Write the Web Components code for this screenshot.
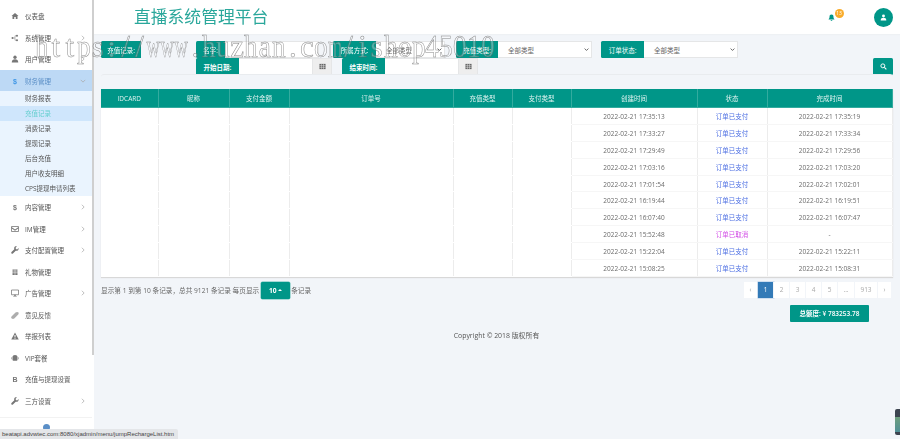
<!DOCTYPE html>
<html lang="zh">
<head>
<meta charset="utf-8">
<title>直播系统管理平台</title>
<style>
  html, body { margin: 0; height: 100%; overflow: hidden; background: #f2f5f9; }
  body { font-family: "Open Sans", "Noto Sans CJK SC", sans-serif; font-size: 6.5px; color: #676a6c; }
</style>
</head>
<body>
<x-app>
  <x-sidebar slot="side"></x-sidebar>
  <x-topbar slot="top"></x-topbar>
  <x-filters slot="main"></x-filters>
  <x-orders slot="main"></x-orders>
  <x-table-foot slot="main"></x-table-foot>
</x-app>

<script>
const TEAL = '#009688';

const ICONS = {
  dashboard: '<path d="M8 2 1 8h2v6h3.5v-4h3v4H13V8h2z"/>',
  sitemap: '<circle cx="3" cy="8" r="2"/><circle cx="12" cy="3.5" r="2"/><circle cx="12" cy="12.5" r="2"/><path d="M3 8h5M8 3.5h4M8 12.5h4M8 3.5v9" stroke="currentColor" fill="none"/>',
  user: '<circle cx="8" cy="4.5" r="3.3"/><path d="M1.5 15c0-5 2.5-6.5 6.5-6.5s6.5 1.500 6.500 6.500z"/>',
  dollar: '<text x="8" y="13.500" text-anchor="middle" font-size="14" font-weight="700" font-family="Liberation Sans">$</text>',
  inbox: '<path d="M1 3h14v10H1z" fill="none" stroke="currentColor" stroke-width="1.600"/><path d="M1 4l7 5 7-5v2.500l-7 5-7-5z"/>',
  wrench: '<path d="M15 4.200 12.300 6.800 9.800 6.200 9.200 3.700 11.800 1C9.500.300 7.300 1 6.500 3.200 6.100 4.400 6.200 5.400 6.600 6.400L1 12c-.900.900-.900 2 0 2.900s2 .900 2.900 0l5.600-5.600c1 .400 2 .500 3.200.100C14.900 8.600 15.700 6.500 15 4.200z"/>',
  gift: '<path d="M3 3h10v11H3z"/><path d="M1.500 6h13M1.500 9.500h13M8 3v11" stroke="#fff" fill="none"/>',
  desktop: '<path d="M1 2h14v9.500H1z" fill="none" stroke="currentColor" stroke-width="1.500"/><path d="M6.500 11.500h3V14h2v1h-7v-1h2z"/>',
  tag: '<path d="M1 11 9 3c1.500-1.500 5-1.500 6 0s0 3.500-1.500 5l-7 7c-1.500 1-3.500 1-5 0s-1.500-2.500-.5-4z" fill-opacity=".6"/>',
  warning: '<path d="M8 1 15.500 15H.5zM7 6v5h2V6zm0 6v1.600h2V12z" fill-rule="evenodd"/>',
  android: '<path d="M3 6c0-2.500 2-4 5-4s5 1.500 5 4v5c0 1.500-1 2.500-2.500 2.500h-5C4 13.500 3 12.500 3 11z"/><path d="M1 6.500h1v4H1zM14 6.500h1v4h-1z"/>',
  bitcoin: '<text x="8" y="13.500" text-anchor="middle" font-size="14" font-weight="700" font-family="Liberation Sans">B</text>',
  bell: '<path d="M8 1c-3 0-4.500 2-4.500 5 0 3-1 4.500-2 5.500v1h13v-1c-1-1-2-2.500-2-5.500 0-3-1.500-5-4.500-5zM6 13.500h4c0 1.200-.9 2-2 2s-2-.8-2-2z"/>',
  search: '<circle cx="6.500" cy="6.500" r="4.500" fill="none" stroke="currentColor" stroke-width="2.200"/><path d="m10 10 4.500 4.500" stroke="currentColor" stroke-width="2.600" fill="none"/>',
  grid: '<path d="M1 2h14v12H1z"/><path d="M1 6h14M1 10h14M5.600 2v12M10.300 2v12" stroke="#eee" fill="none"/>'
};
const icon = (name, size) => `<svg viewBox="0 0 16 16" width="${size}" height="${size}" fill="currentColor" aria-hidden="true">${ICONS[name]}</svg>`;

// el original usa una fuente de ancho fijo: cada letra en su celda
const markChars = [...'https://www.huzhan.com/ishop45010'].map(c => {
  const sx = 'wm'.includes(c) ? .6 : 'hunpoa0145'.includes(c) ? .88 : 1;
  return `<span class="c"><span style="transform:scaleX(${sx})">${c}</span></span>`;
}).join('');

class XApp extends HTMLElement {
  constructor() {
    super();
    this.attachShadow({ mode: 'open' });
    this.shadowRoot.innerHTML = `
      <style>
        :host { display: block; position: relative; width: 900px; height: 439px; overflow: hidden; filter: blur(.4px); }
        .shell { display: flex; height: 100%; }
        .col { flex: 1; min-width: 0; display: flex; flex-direction: column; }
        .content { flex: 1; display: flex; flex-direction: column; padding: 7px 7px 0; }
        /* marca de agua por encima de todo */
        .mark {
          position: absolute; left: 35px; top: 31px; display: flex; pointer-events: none;
          font: 31px/1 "Liberation Serif", serif;
          color: rgba(255,255,255,.3); -webkit-text-stroke: .5px rgba(95,95,95,.75);
        }
        .c { width: 13.950px; display: flex; justify-content: center; }
        .c span { display: block; flex: none; }
        .status {
          position: absolute; left: 0; bottom: 0; height: 10px; padding: 0 4px 0 2px; line-height: 10px;
          background: #e4e6e9; border-top-right-radius: 2px; color: #444;
          font: 6px/10px "Liberation Sans", sans-serif;
        }
        .widget { position: absolute; right: 0; top: 409px; width: 5px; height: 26px; background: linear-gradient(#3d4450 30%, #6f9f7d 30%, #4f8f98 90%, #3d4450 90%); border-radius: 2px 0 0 2px; }
      </style>
      <div class="shell">
        <slot name="side"></slot>
        <div class="col">
          <slot name="top"></slot>
          <div class="content"><slot name="main"></slot></div>
        </div>
      </div>
      <div class="mark">${markChars}</div>
      <div class="status">beatapi.advwtec.com:8080/xjadmin/menu/jumpRechargeList.htm</div>
      <div class="widget"></div>`;
  }
}

class XSidebar extends HTMLElement {
  constructor() {
    super();
    this.attachShadow({ mode: 'open' });
  }
  connectedCallback() {
    const items = [
      ['dashboard', '仪表盘'], ['sitemap', '系统管理', 1], ['user', '用户管理', 1],
      ['dollar', '财务管理', 2],
      ['dollar', '内容管理', 1], ['inbox', 'IM管理', 1], ['wrench', '支付配置管理', 1], ['gift', '礼物管理'],
      ['desktop', '广告管理', 1], ['tag', '意见反馈'], ['warning', '举报列表'], ['android', 'VIP套餐'],
      ['bitcoin', '充值与提现设置'], ['wrench', '三方设置', 1]
    ];
    const subs = ['财务报表', '充值记录', '消费记录', '提现记录', '后台充值', '用户收支明细', 'CPS提现申请列表'];
    const rows = items.map(([ic, label, arrow]) => {
      const row = `<div class="row ${arrow === 2 ? 'open' : ''}"><span class="ic">${icon(ic, 8)}</span><span class="tx">${label}</span>${
        arrow ? `<svg class="chev" viewBox="0 0 8 8" width="6" height="6" fill="none" stroke="currentColor" stroke-width="1"><path d="${arrow === 2 ? 'M1 2.500 4 5.500 7 2.500' : 'M2.500 1l3 3-3 3'}"/></svg>` : ''}</div>`;
      if (arrow !== 2) return row;
      return row + '<div class="subs">' + subs.map((s, i) => `<div class="sub ${i === 1 ? 'on' : ''}">${s}</div>`).join('') + '</div>';
    }).join('');
    this.shadowRoot.innerHTML = `
      <style>
        :host { display: flex; flex-direction: column; flex: none; width: 94px; height: 100%; background: #fff; position: relative; }
        nav { flex: 1; padding: 5.250px 0 0; box-sizing: border-box; overflow: hidden; width: 94px; background: linear-gradient(90deg,#fff 92px,#cfcfcf 92px) no-repeat; background-size: 100% 355px; }
        .row { display: flex; align-items: center; height: 21.500px; width: 92px; padding-left: 11px; box-sizing: border-box; color: #555; }
        .ic { width: 14px; flex: none; display: flex; color: #777; }
        .tx { flex: 1; white-space: nowrap; }
        .chev { margin-right: 6px; color: #aaa; }
        .row.open { background: #bdd9f5; color: #5b8fc7; }
        .row.open .ic { color: #3f97e6; }
        .subs { width: 92px; background: #eaf4fe; }
        .sub { height: 15px; line-height: 15px; padding-left: 25px; color: #555; white-space: nowrap; }
        .sub.on { background: #cfe6fc; color: #67cfd0; }
        .bottom { height: 22px; width: 92px; flex: none; border-top: 1px solid #f2f2f2; display: flex; justify-content: center; padding-top: 6px; box-sizing: border-box; }
        .dot { width: 7px; height: 7px; border-radius: 50%; background: #5b8fc7; }
      </style>
      <nav>${rows}</nav>
      <div class="bottom"><span class="dot"></span></div>`;
  }
}

class XTopbar extends HTMLElement {
  constructor() {
    super();
    this.attachShadow({ mode: 'open' });
    this.shadowRoot.innerHTML = `
      <style>
        :host { display: flex; align-items: center; flex: none; height: 34px; background: #fff; padding: 0 7px 0 40px; box-shadow: 0 1px 1px #eef1f4; }
        h1 { margin: 0; font: 400 16.800px/1 "Noto Sans CJK SC", sans-serif; color: #2aa79b; flex: 1; position: relative; top: -1px; }
        .bell { color: ${TEAL}; display: flex; position: relative; margin-right: 39.500px; }
        .badge { position: absolute; left: 7px; top: -5px; width: 9px; height: 9px; border-radius: 50%; background: #f9ac2b; color: #fff; font-size: 5px; line-height: 9px; text-align: center; }
        .me { width: 19px; height: 19px; border-radius: 50%; background: ${TEAL}; color: #fff; display: flex; align-items: center; justify-content: center; }
      </style>
      <h1>直播系统管理平台</h1>
      <span class="bell">${icon('bell', 7)}<span class="badge">13</span></span>
      <span class="me">${icon('user', 7)}</span>`;
  }
}

// etiqueta verde + control
class XField extends HTMLElement {
  constructor() {
    super();
    this.attachShadow({ mode: 'open' });
  }
  connectedCallback() {
    const type = this.getAttribute('type');
    const labelW = this.getAttribute('label-w');
    const ctlW = this.getAttribute('ctl-w') || 0;
    let ctl = '';
    if (type === 'text') ctl = `<span class="ctl" style="width:${ctlW}px"></span>`;
    if (type === 'select') ctl = `<span class="ctl sel" style="width:${ctlW}px"><span>全部类型</span><svg viewBox="0 0 8 8" width="5" height="5" fill="none" stroke="#555" stroke-width="1.400"><path d="M1 2.500 4 5.500 7 2.500"/></svg></span>`;
    if (type === 'date') ctl = `<span class="ctl" style="width:${ctlW}px"></span><span class="add">${icon('grid', 7)}</span>`;
    this.shadowRoot.innerHTML = `
      <style>
        :host { display: flex; flex: none; height: 17px; }
        label { width: ${labelW}px; box-sizing: border-box; background: ${TEAL}; color: #fff; display: flex; align-items: center; justify-content: center; border-radius: 1.500px 0 0 1.500px; font-size: 6.500px; white-space: nowrap; }
        .ctl { box-sizing: border-box; background: #fff; border: 1px solid #e5e6e7; border-left: 0; display: flex; align-items: center; color: #666; }
        .sel { justify-content: space-between; padding: 0 2px 0 10px; }
        .add { width: 19px; background: #eee; border: 1px solid #e5e6e7; border-left: 0; box-sizing: border-box; display: flex; align-items: center; justify-content: center; color: #666; }
      </style>
      <label><slot></slot></label>${ctl}`;
  }
}

class XFilters extends HTMLElement {
  constructor() {
    super();
    this.attachShadow({ mode: 'open' });
    this.shadowRoot.innerHTML = `
      <style>
        :host { display: block; flex: none; }
        .line { display: flex; height: 17px; }
        .two { padding-left: 95px; font-weight: 700; }
        .go { margin-left: auto; width: 20px; height: 17px; background: ${TEAL}; color: #fff; border-radius: 1.500px; display: flex; align-items: center; justify-content: center; }
      </style>
      <div class="line">
        <x-field label-w="40">充值记录:</x-field>
        <x-field label-w="29" ctl-w="94" type="text" style="margin-left:55px">名字:</x-field>
        <x-field label-w="43" ctl-w="69" type="select" style="margin-left:14px">所属方式:</x-field>
        <x-field label-w="42" ctl-w="94" type="select" style="margin-left:11px">充值类型:</x-field>
        <x-field label-w="43" ctl-w="94" type="select" style="margin-left:9px">订单状态:</x-field>
      </div>
      <div class="line two">
        <x-field label-w="43" ctl-w="74" type="date">开始日期:</x-field>
        <x-field label-w="43" ctl-w="74" type="date" style="margin-left:10px">结束时间:</x-field>
        <span class="go">${icon('search', 7)}</span>
      </div>`;
  }
}

class XOrders extends HTMLElement {
  constructor() {
    super();
    this.attachShadow({ mode: 'open' });
  }
  connectedCallback() {
    const cols = [57, 71, 60, 164, 59, 59, 126, 70, 125];
    const heads = ['IDCARD', '昵称', '支付金额', '订单号', '充值类型', '支付类型', '创建时间', '状态', '完成时间'];
    const data = [
      ['17:35:13', '17:35:19'], ['17:33:27', '17:33:34'], ['17:29:49', '17:29:56'], ['17:03:16', '17:03:20'], ['17:01:54', '17:02:01'],
      ['16:19:44', '16:19:51'], ['16:07:40', '16:07:47'], ['15:52:48', null], ['15:22:04', '15:22:11'], ['15:08:25', '15:08:31']
    ];
    const body = data.map(([a, b]) => `<tr>
      <td></td><td></td><td></td><td></td><td></td><td></td>
      <td>2022-02-21 ${a}</td>
      <td class="${b ? 'paid' : 'void'}">${b ? '订单已支付' : '订单已取消'}</td>
      <td>${b ? '2022-02-21 ' + b : '-'}</td></tr>`).join('');
    this.shadowRoot.innerHTML = `
      <style>
        :host { display: block; flex: none; border-top: 1px solid #e9ecef; border-radius: 3px 3px 0 0; margin-top: -1px; padding-top: 14px; }
        table { width: 791px; table-layout: fixed; border-collapse: collapse; background: #fff; box-shadow: 0 1px 1px #d8d8d8; line-height: 9px; }
        th { height: 18.500px; box-sizing: border-box; padding: 0; background: ${TEAL}; color: #dff3f0; font-weight: 400; border: 1px solid #33ab9f; border-width: 0 1px 1px 0; }
        td { height: 16.900px; box-sizing: border-box; padding: 1px 0 0; text-align: center; color: #6b6b6b; border-right: 1px solid #ececec; border-bottom: 1px solid #f6f6f6; }
        td:nth-child(-n+6) { border-bottom-color: #fff; }
        .paid { color: #4d6fe3; }
        .void { color: #d24ce6; }
      </style>
      <table>
        <colgroup>${cols.map(w => `<col style="width:${w}px">`).join('')}</colgroup>
        <thead><tr>${heads.map(h => `<th>${h}</th>`).join('')}</tr></thead>
        <tbody>${body}</tbody>
      </table>`;
  }
}

class XTableFoot extends HTMLElement {
  constructor() {
    super();
    this.attachShadow({ mode: 'open' });
    const pages = ['‹', '1', '2', '3', '4', '5', '...', '913', '›'];
    const widths = [14, 16, 16, 16, 16, 16, 17, 23, 14];
    this.shadowRoot.innerHTML = `
      <style>
        :host { display: block; flex: 1; }
        .bar { display: flex; align-items: flex-start; justify-content: space-between; padding-top: 5px; }
        .info { display: flex; align-items: center; height: 17px; white-space: nowrap; color: #666; font-size: 6.650px; }
        .size { width: 29px; height: 17px; margin: 0 1px 0 2px; background: ${TEAL}; color: #fff; border-radius: 1.500px; display: flex; align-items: center; justify-content: center; gap: 2px; font-weight: 700; box-shadow: 0 0 0 .5px #5cbdb3; }
        .size i { border: 2px solid transparent; border-bottom-color: #fff; border-top: 0; }
        .pager { display: flex; height: 16px; margin-right: 1px; }
        .pager span { background: #fff; color: #aaa; display: flex; align-items: center; justify-content: center; border-right: 1px solid #f2f5f9; box-sizing: border-box; }
        .pager span.on { background: #337ab7; color: #fff; box-shadow: 0 0 0 .5px #a9c8e6; }
        .sum { display: flex; justify-content: flex-end; margin: 6px 24px 0 0; }
        .sum span { width: 79px; height: 17px; background: ${TEAL}; color: #fff; border-radius: 1px; display: flex; align-items: center; justify-content: center; font-weight: 600; white-space: nowrap; }
        footer { text-align: center; margin-top: 9px; color: #555; height: 10px; line-height: 10px; padding-right: 1px; font-size: 6.900px; }
      </style>
      <div class="bar">
        <div class="info">显示第 1 到第 10 条记录，总共 9121 条记录 每页显示<span class="size">10<i></i></span>条记录</div>
        <div class="pager">${pages.map((p, i) => `<span class="${p === '1' ? 'on' : ''}" style="width:${widths[i]}px">${p}</span>`).join('')}</div>
      </div>
      <div class="sum"><span>总额度: ¥ 783253.78</span></div>
      <footer>Copyright © 2018 版权所有</footer>`;
  }
}

customElements.define('x-app', XApp);
customElements.define('x-sidebar', XSidebar);
customElements.define('x-topbar', XTopbar);
customElements.define('x-field', XField);
customElements.define('x-filters', XFilters);
customElements.define('x-orders', XOrders);
customElements.define('x-table-foot', XTableFoot);
</script>
</body>
</html>
